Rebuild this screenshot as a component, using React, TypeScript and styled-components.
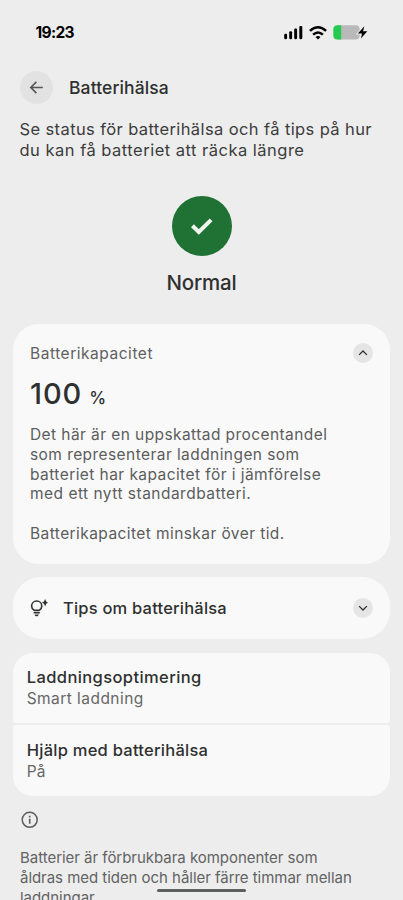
import React from "react";
import styled, { createGlobalStyle } from "styled-components";

const GlobalStyle = createGlobalStyle`
  *, *::before, *::after { box-sizing: border-box; }
  html, body { margin: 0; background: #ededed; }
  h1, h2, p { margin: 0; font-size: inherit; font-weight: inherit; }
  button { border: 0; padding: 0; font: inherit; color: inherit; }
`;

const Screen = styled.main`
  position: relative;
  width: 403px;
  height: 900px;
  overflow: hidden;
  background: #ededed;
  color: #2f3030;
  font-family: Inter, "Open Sans", sans-serif;
  font-size: 15.5px;
  white-space: nowrap;
`;

const StatusBar = styled.header`
  display: flex;
  justify-content: space-between;
  align-items: center;
  height: 65px;
  padding: 0 35px 0 35.5px;
  color: #000;
`;

const Clock = styled.time`
  font-size: 15.5px;
  font-weight: 700;
  letter-spacing: -0.65px;
`;

const StatusIcons = styled.div`
  display: flex;
  align-items: center;
`;

const TopBar = styled.div`
  display: flex;
  align-items: center;
  gap: 16px;
  height: 33px;
  margin-top: 6px;
  padding-left: 20px;
`;

const BackButton = styled.button`
  display: grid;
  place-items: center;
  width: 33px;
  height: 33px;
  border-radius: 50%;
  background: #e2e2e2;
  color: #555;
`;

const Title = styled.h1`
  font-size: 17.5px;
  line-height: 22px;
  font-weight: 450;
  letter-spacing: 0.1px;
`;

const Line = styled.span<{ $track: number }>`
  display: block;
  letter-spacing: ${(p) => p.$track}px;
`;

const Intro = styled.p`
  margin-top: 15px;
  padding-left: 19.5px;
  font-size: 16.5px;
  line-height: 21px;
  color: #3b3c3c;
`;

const Health = styled.section`
  display: flex;
  flex-direction: column;
  align-items: center;
  gap: 14px;
  height: 127.5px;
  margin-top: 35px;
`;

const HealthBadge = styled.div`
  display: grid;
  place-items: center;
  width: 60px;
  height: 60px;
  border-radius: 50%;
  background: #1f7234;
`;

const HealthLabel = styled.h2`
  font-size: 20.5px;
  line-height: 26px;
  font-weight: 450;
  letter-spacing: -0.15px;
`;

const Cards = styled.div`
  display: flex;
  flex-direction: column;
  gap: 13.5px;
  padding: 0 13px;
`;

const CapacityCard = styled.section`
  height: 240px;
  padding: 19.5px 17px 0;
  border-radius: 26px;
  background: #f9f9f9;
`;

const CardHeader = styled.div`
  display: flex;
  align-items: center;
  justify-content: space-between;
  height: 20px;
`;

const CardLabel = styled.h2`
  padding-top: 2px;
  line-height: 20px;
  letter-spacing: 0.53px;
  color: #5f6060;
`;

const ToggleButton = styled.button`
  display: grid;
  place-items: center;
  width: 20px;
  height: 20px;
  border-radius: 50%;
  background: #e5e5e5;
  color: #303030;
`;

const Capacity = styled.div`
  display: flex;
  align-items: baseline;
  gap: 7px;
  height: 36px;
  margin-top: 13px;
  line-height: 36px;
`;

const CapacityNumber = styled.span`
  font-size: 29px;
  font-weight: 500;
  letter-spacing: 0.9px;
`;

const CapacityUnit = styled.span`
  font-size: 17px;
  font-weight: 500;
`;

const Description = styled.p`
  margin-top: 13px;
  line-height: 19.8px;
  color: #5c5d5d;

  & + & {
    margin-top: 19.8px;
  }
`;

const TipsCard = styled.section`
  display: flex;
  align-items: center;
  height: 62px;
  padding: 0 17px;
  border-radius: 28px;
  background: #f9f9f9;
`;

const TipsLabel = styled.h2`
  flex: 1;
  padding-left: 15px;
  font-size: 16.5px;
  font-weight: 480;
  letter-spacing: 0.2px;
`;

const SettingsList = styled.div`
  display: flex;
  flex-direction: column;
  gap: 2px;
`;

const SettingRow = styled.section`
  height: 70.5px;
  padding: 13.5px 13.7px 0;
  border-radius: 3px;
  background: #f9f9f9;

  &:first-child {
    border-radius: 20px 20px 3px 3px;
  }
  &:last-child {
    border-radius: 3px 3px 20px 20px;
  }
`;

const SettingTitle = styled.h2`
  font-size: 16.5px;
  line-height: 22px;
  font-weight: 500;
`;

const SettingValue = styled.p`
  line-height: 22px;
  color: #666767;
`;

const Footer = styled.footer`
  padding: 15.5px 20px 0;
  color: #5c5d5d;

  svg {
    display: block;
  }
`;

const FooterText = styled.p`
  margin-top: 19.3px;
  font-size: 15px;
  line-height: 19.8px;
  color: #626363;
`;

const HomeIndicator = styled.div`
  position: absolute;
  left: 157px;
  bottom: 8px;
  width: 89px;
  height: 3.5px;
  border-radius: 2px;
  background: #5d605e;
`;

const StatusGlyphs = () => (
  <svg width="86" height="22" viewBox="282 22 86 22">
    <rect x="284.2" y="33.8" width="2.9" height="5.4" rx="1.1" />
    <rect x="289.2" y="31.2" width="2.9" height="8" rx="1.1" />
    <rect x="294.2" y="28.6" width="2.9" height="10.6" rx="1.1" />
    <rect x="299.3" y="26" width="3" height="13.2" rx="1.1" />
    <g fill="none" stroke="#000" strokeWidth="2.5">
      <path d="M309.9 30.9 Q318 23.6 326.1 30.9" />
      <path d="M313.1 34.7 Q318 30.2 322.9 34.7" />
    </g>
    <path d="M315.5 37 Q318 34.9 320.5 37 L318 39.6 Z" />
    <path d="M337.5 25.2H355.5Q359.7 25.2 359.7 29.4V35.2Q359.7 39.4 355.5 39.4H337.5Z" fill="#b9b9b9" />
    <path d="M341.2 25.2V39.4H337.5Q333.3 39.4 333.3 35.2V29.4Q333.3 25.2 337.5 25.2Z" fill="#25cb51" />
    <path d="M364.3 26.3L357.9 33.6H362L360.9 38.5L367.3 31.2H363.1Z" stroke="#ededed" strokeWidth="2" paintOrder="stroke" />
  </svg>
);

const BackArrow = () => (
  <svg width="15" height="15" viewBox="0 0 15 15" fill="none" stroke="currentColor" strokeWidth="1.6">
    <path d="M13.8 7.5H2M7.4 1.9L1.8 7.5L7.4 13.1" />
  </svg>
);

const Chevron = ({ up = false }: { up?: boolean }) => (
  <svg width="10" height="10" viewBox="0 0 10 10" fill="none" stroke="currentColor" strokeWidth="1.3">
    <path d={up ? "M1.1 6.9L5 3L8.9 6.9" : "M1.1 3.1L5 7L8.9 3.1"} />
  </svg>
);

const Check = () => (
  <svg width="24" height="20" viewBox="0 0 24 20" fill="none" stroke="#f0f6ef" strokeWidth="4">
    <path d="M2.4 9.7L8.8 16L21.1 3.8" />
  </svg>
);

const TipsBulb = () => (
  <svg width="18" height="20" viewBox="0 0 18 20" fill="#303131">
    <path
      d="M4.2 12.4C2.5 11.4 1.6 9.9 1.6 8.1C1.6 5.2 3.9 3 6.7 3C9.5 3 11.8 5.2 11.8 8.1C11.8 9.9 10.9 11.4 9.2 12.4Z"
      fill="none"
      stroke="#303131"
      strokeWidth="1.6"
    />
    <path d="M3.6 14.1H9.8V15.5H3.6ZM4.6 16.4H8.8C8.5 17.6 7.8 18.2 6.7 18.2C5.6 18.2 4.9 17.6 4.6 16.4Z" />
    <path d="M15.1 1L16.2 3.6L18 4.7L16.2 5.8L15.1 8.4L14 5.8L11.9 4.7L14 3.6Z" />
  </svg>
);

const InfoIcon = () => (
  <svg width="19" height="18" viewBox="0 0 19 18" fill="none" stroke="currentColor" strokeWidth="1.5">
    <circle cx="9.7" cy="8.8" r="7.5" />
    <path d="M9.7 7.8V12.8M9.7 4.8V6.5" strokeWidth="1.6" />
  </svg>
);

type TextLine = [text: string, track: number];

const Lines = ({ lines }: { lines: TextLine[] }) => (
  <>
    {lines.map(([text, track]) => (
      <Line key={text} $track={track}>
        {text}
      </Line>
    ))}
  </>
);

const introLines: TextLine[] = [
  ["Se status för batterihälsa och få tips på hur", 0.39],
  ["du kan få batteriet att räcka längre", 0.49],
];

const descriptionLines: TextLine[] = [
  ["Det här är en uppskattad procentandel", 0.42],
  ["som representerar laddningen som", 0.43],
  ["batteriet har kapacitet för i jämförelse", 0.43],
  ["med ett nytt standardbatteri.", 0.48],
];

const footerLines: TextLine[] = [
  ["Batterier är förbrukbara komponenter som", -0.03],
  ["åldras med tiden och håller färre timmar mellan", -0.04],
  ["laddningar.", -0.04],
];

const settings: { title: TextLine; value: TextLine }[] = [
  { title: ["Laddningsoptimering", 0.4], value: ["Smart laddning", 0.45] },
  { title: ["Hjälp med batterihälsa", 0.25], value: ["På", 0.1] },
];

export default function App() {
  return (
    <>
      <GlobalStyle />
      <Screen>
        <StatusBar>
          <Clock>19:23</Clock>
          <StatusIcons>
            <StatusGlyphs />
          </StatusIcons>
        </StatusBar>
        <TopBar>
          <BackButton aria-label="Tillbaka">
            <BackArrow />
          </BackButton>
          <Title>Batterihälsa</Title>
        </TopBar>
        <Intro>
          <Lines lines={introLines} />
        </Intro>
        <Health>
          <HealthBadge>
            <Check />
          </HealthBadge>
          <HealthLabel>Normal</HealthLabel>
        </Health>
        <Cards>
          <CapacityCard>
            <CardHeader>
              <CardLabel>Batterikapacitet</CardLabel>
              <ToggleButton aria-label="Dölj">
                <Chevron up />
              </ToggleButton>
            </CardHeader>
            <Capacity>
              <CapacityNumber>100</CapacityNumber>
              <CapacityUnit>%</CapacityUnit>
            </Capacity>
            <Description>
              <Lines lines={descriptionLines} />
            </Description>
            <Description>
              <Lines lines={[["Batterikapacitet minskar över tid.", 0.42]]} />
            </Description>
          </CapacityCard>
          <TipsCard>
            <TipsBulb />
            <TipsLabel>Tips om batterihälsa</TipsLabel>
            <ToggleButton aria-label="Visa">
              <Chevron />
            </ToggleButton>
          </TipsCard>
          <SettingsList>
            {settings.map(({ title, value }) => (
              <SettingRow key={title[0]}>
                <SettingTitle>
                  <Lines lines={[title]} />
                </SettingTitle>
                <SettingValue>
                  <Lines lines={[value]} />
                </SettingValue>
              </SettingRow>
            ))}
          </SettingsList>
        </Cards>
        <Footer>
          <InfoIcon />
          <FooterText>
            <Lines lines={footerLines} />
          </FooterText>
        </Footer>
        <HomeIndicator />
      </Screen>
    </>
  );
}
